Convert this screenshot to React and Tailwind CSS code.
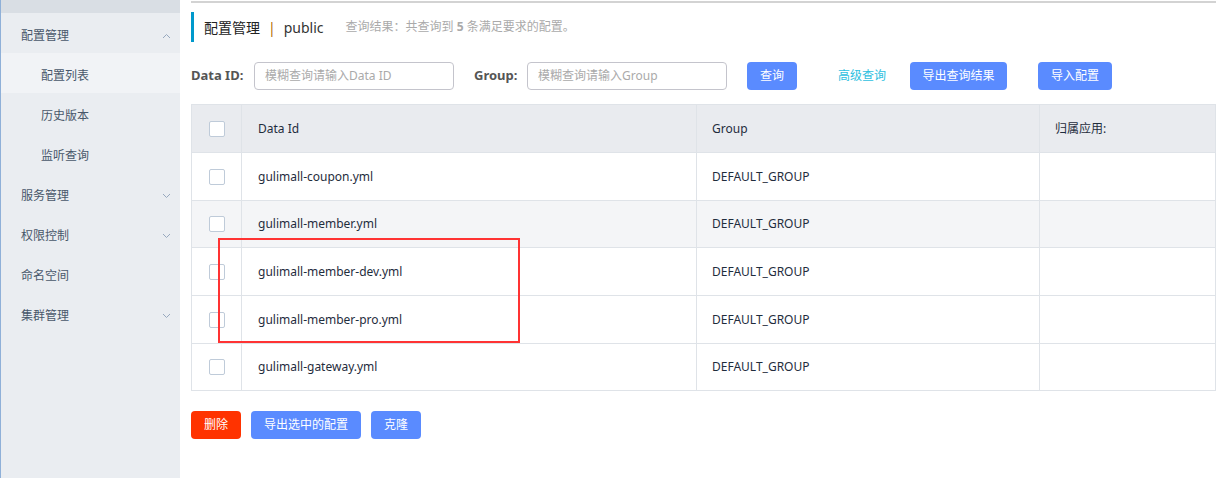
import React from 'react';

const font = { fontFamily: '"Noto Sans", "Noto Sans CJK SC", sans-serif' };

const Chevron = ({ up }) => (
  <svg width="9" height="6" viewBox="0 0 9 6" className="text-[#97a8be]">
    <path d={up ? 'M1 5 L4.5 1.5 L8 5' : 'M1 1 L4.5 4.5 L8 1'} fill="none" stroke="currentColor" strokeWidth="1" />
  </svg>
);

const menu = [
  { label: '配置管理', open: true, children: ['配置列表', '历史版本', '监听查询'] },
  { label: '服务管理', arrow: true },
  { label: '权限控制', arrow: true },
  { label: '命名空间' },
  { label: '集群管理', arrow: true },
];

const rows = [
  { name: 'gulimall-coupon.yml', h: 'h-[48px]' },
  { name: 'gulimall-member.yml', h: 'h-[47px]' },
  { name: 'gulimall-member-dev.yml', h: 'h-[48px]' },
  { name: 'gulimall-member-pro.yml', h: 'h-[48px]' },
  { name: 'gulimall-gateway.yml', h: 'h-[47px]' },
];

const Checkbox = () => (
  <span className="block w-4 h-4 rounded-[2px] border border-[#bfcbd9] bg-white" />
);

const Sidebar = () => (
  <div className="w-[180px] shrink-0 bg-[#eaedf1] border-l border-[#8fb0d8] min-h-[478px]">
    <div className="h-[13px] bg-[#d9dee4]" />
    {menu.map((m) => (
      <div key={m.label}>
        <div className="h-10 flex items-center justify-between pt-[5px] pl-[20px] pr-[9px] text-[12px] text-[#48576a]">
          <span>{m.label}</span>
          {m.open && <Chevron up />}
          {m.arrow && <Chevron />}
        </div>
        {m.children && m.children.map((c, i) => (
          <div
            key={c}
            className={`h-10 flex items-center pt-[5px] pl-[40px] text-[12px] text-[#48576a] ${i === 0 ? 'bg-[#f1f3f6]' : ''}`}
          >
            {c}
          </div>
        ))}
      </div>
    ))}
  </div>
);

const Btn = ({ children, red, w }) => (
  <button
    className={`h-7 ${w} shrink-0 whitespace-nowrap rounded-[4px] text-white text-[12px] flex items-center justify-center ${red ? 'bg-[#ff3300]' : 'bg-[#5a8bff]'}`}
  >
    {children}
  </button>
);

const Cell = ({ w, className = '', children }) => (
  <div className={`${w} flex items-center border-r border-[#dfe3e8] ${className}`}>{children}</div>
);

export default function App() {
  return (
    <div className="relative flex w-[1216px] h-[478px] overflow-hidden bg-white" style={font}>
      <Sidebar />
      <div className="flex-1 pl-[11px] pt-px min-w-0">
        <div className="border-t-2 border-[#d3d3d3] pt-[9px]">
          <div className="flex items-center h-[30px] border-l-[3px] border-[#0099cc] pl-[10px]">
            <span className="text-[14px] text-[#222]">配置管理</span>
            <span className="text-[14px] text-[#b06a00] mx-[8px]">|</span>
            <span className="text-[14px] text-[#333]">public</span>
            <span className="text-[12px] text-[#aaa] ml-[22px]">
              查询结果：共查询到 <b className="font-bold">5</b> 条满足要求的配置。
            </span>
          </div>
        </div>

        <div className="flex items-center mt-[20px] h-7">
          <span className="text-[13px] font-bold text-[#555] w-[63px] whitespace-nowrap">Data ID:</span>
          <div className="w-[200px] h-7 border border-[#c4c4cc] rounded-[4px] flex items-center px-[10px] text-[12px] text-[#aaa]">
            模糊查询请输入Data ID
          </div>
          <span className="text-[13px] font-bold text-[#555] ml-[20px] w-[53px]">Group:</span>
          <div className="w-[200px] h-7 border border-[#c4c4cc] rounded-[4px] flex items-center px-[10px] text-[12px] text-[#aaa]">
            模糊查询请输入Group
          </div>
          <div className="ml-[20px]"><Btn w="w-[50px]">查询</Btn></div>
          <span className="ml-[41px] text-[12px] text-[#2ec0e0] whitespace-nowrap">高级查询</span>
          <div className="ml-[24px]"><Btn w="w-[97px]">导出查询结果</Btn></div>
          <div className="ml-[31px]"><Btn w="w-[74px]">导入配置</Btn></div>
        </div>

        <div className="mt-[14px] border border-[#dfe3e8] border-r-0 w-[1025px]">
          <div className="flex h-[47px] bg-[#e9ebef] text-[12px] text-[#1f2d3d]">
            <Cell w="w-[50px]" className="justify-center"><Checkbox /></Cell>
            <Cell w="w-[455px]" className="pl-[16px]">Data Id</Cell>
            <Cell w="w-[343px]" className="pl-[15px]">Group</Cell>
            <Cell w="flex-1" className="pl-[15px]">归属应用:</Cell>
          </div>
          {rows.map((r, i) => (
            <div
              key={r.name}
              className={`flex ${r.h} border-t border-[#dfe3e8] text-[12px] text-[#1f2d3d] ${i === 1 ? 'bg-[#f4f5f7]' : 'bg-white'}`}
            >
              <Cell w="w-[50px]" className="justify-center"><Checkbox /></Cell>
              <Cell w="w-[455px]" className="pl-[16px]">{r.name}</Cell>
              <Cell w="w-[343px]" className="pl-[15px]">DEFAULT_GROUP</Cell>
              <Cell w="flex-1" />
            </div>
          ))}
        </div>

        <div className="flex gap-[10px] mt-[20px]">
          <Btn red w="w-[50px]">删除</Btn>
          <Btn w="w-[110px]">导出选中的配置</Btn>
          <Btn w="w-[50px]">克隆</Btn>
        </div>
      </div>

      <div className="absolute left-[218px] top-[238px] w-[302px] h-[105px] border-2 border-[#ff3333] pointer-events-none" />
    </div>
  );
}
